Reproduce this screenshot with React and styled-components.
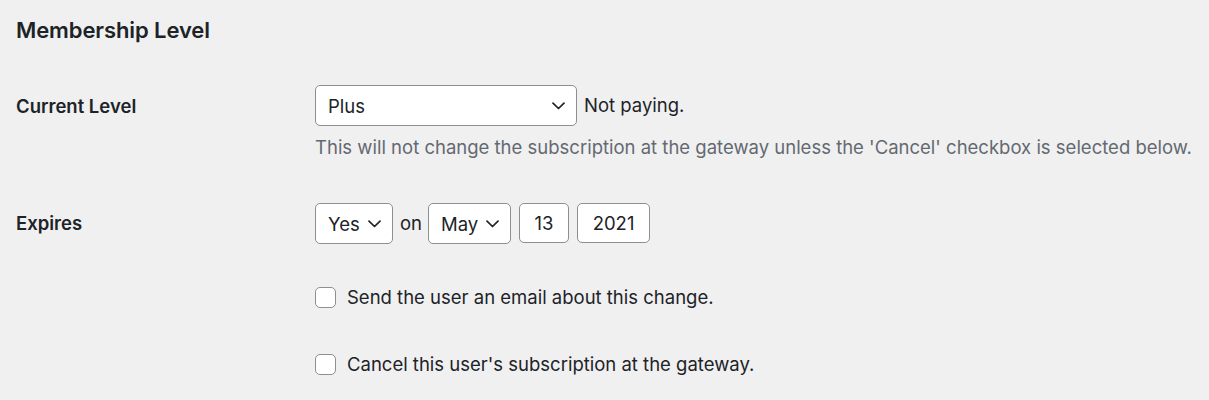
import React from "react";
import styled, { createGlobalStyle } from "styled-components";

const GlobalStyle = createGlobalStyle`
  html, body {
    margin: 0;
    padding: 0;
    background: #f0f0f1;
  }
  body {
    font-family: Inter, "Liberation Sans", Arial, sans-serif;
    color: #1d2327;
    font-size: 18.5px;
  }
`;

const Chevron = () => (
  <svg width="13" height="8" viewBox="0 0 13 8" fill="none">
    <path d="M1 1.2 L6.5 6.5 L12 1.2" stroke="#1d2327" strokeWidth="1.7" strokeLinecap="round" strokeLinejoin="round" />
  </svg>
);

const App = () => {
  return (
    <>
      <GlobalStyle />
      <Page>
        <Heading>Membership Level</Heading>
        <Table>
          <Row $top={40}>
            <Label $pad={9}>Current Level</Label>
            <Field>
              <Line>
                <Select $width={262}>
                  <span>Plus</span>
                  <Chevron />
                </Select>
                <Note>Not paying.</Note>
              </Line>
              <Description>
                This will not change the subscription at the gateway unless the 'Cancel' checkbox is selected below.
              </Description>
            </Field>
          </Row>
          <Row $top={44}>
            <Label $pad={8}>Expires</Label>
            <Field>
              <Line>
                <Select $width={78}>
                  <span>Yes</span>
                  <Chevron />
                </Select>
                <Note $gap={7}>on</Note>
                <Select $width={83} $gap={6}>
                  <span>May</span>
                  <Chevron />
                </Select>
                <Input $width={50} $gap={8}>13</Input>
                <Input $width={73} $gap={8}>2021</Input>
              </Line>
            </Field>
          </Row>
          <Row $top={41}>
            <Label />
            <Field>
              <Check>
                <Box />
                <span>Send the user an email about this change.</span>
              </Check>
            </Field>
          </Row>
          <Row $top={43}>
            <Label />
            <Field>
              <Check>
                <Box />
                <span>Cancel this user's subscription at the gateway.</span>
              </Check>
            </Field>
          </Row>
        </Table>
      </Page>
    </>
  );
};

export default App;

const Page = styled.div`
  padding: 15px 0 0 16px;
  height: 385px;
  overflow: hidden;
`;

const Heading = styled.h2`
  margin: 0;
  font-size: 22px;
  font-weight: 600;
  line-height: 30px;
  letter-spacing: -0.1px;
`;

const Table = styled.div`
  display: flex;
  flex-direction: column;
`;

const Row = styled.div`
  display: flex;
  align-items: flex-start;
  margin-top: ${(p) => p.$top}px;
`;

const Label = styled.div`
  width: 299px;
  flex-shrink: 0;
  font-weight: 600;
  font-size: 18.5px;
  line-height: 24px;
  padding-top: ${(p) => p.$pad || 0}px;
`;

const Field = styled.div`
  display: flex;
  flex-direction: column;
`;

const Line = styled.div`
  display: flex;
  align-items: center;
`;

const Select = styled.div`
  box-sizing: border-box;
  width: ${(p) => p.$width}px;
  height: 41px;
  margin-left: ${(p) => p.$gap || 0}px;
  background: #fff;
  border: 1.3px solid #8c8f94;
  border-radius: 5px;
  display: flex;
  align-items: center;
  justify-content: space-between;
  padding: 0 11px 0 12px;
  font-size: 18.5px;
  line-height: 24px;
`;

const Input = styled.div`
  box-sizing: border-box;
  width: ${(p) => p.$width}px;
  height: 40px;
  margin-left: ${(p) => p.$gap || 0}px;
  margin-top: -2px;
  background: #fff;
  border: 1.3px solid #8c8f94;
  border-radius: 5px;
  display: flex;
  align-items: center;
  justify-content: center;
  font-size: 18.5px;
`;

const Note = styled.span`
  margin-left: ${(p) => p.$gap || 7}px;
  font-size: 18.5px;
  line-height: 24px;
  margin-top: -2px;
`;

const Description = styled.p`
  margin: 9px 0 0;
  color: #646970;
  font-size: 18.5px;
  line-height: 24px;
`;

const Check = styled.label`
  display: flex;
  align-items: center;
  gap: 11px;
  font-size: 18.5px;
  line-height: 24px;
`;

const Box = styled.span`
  box-sizing: border-box;
  width: 21px;
  height: 21px;
  background: #fff;
  border: 1.3px solid #8c8f94;
  border-radius: 5px;
`;
